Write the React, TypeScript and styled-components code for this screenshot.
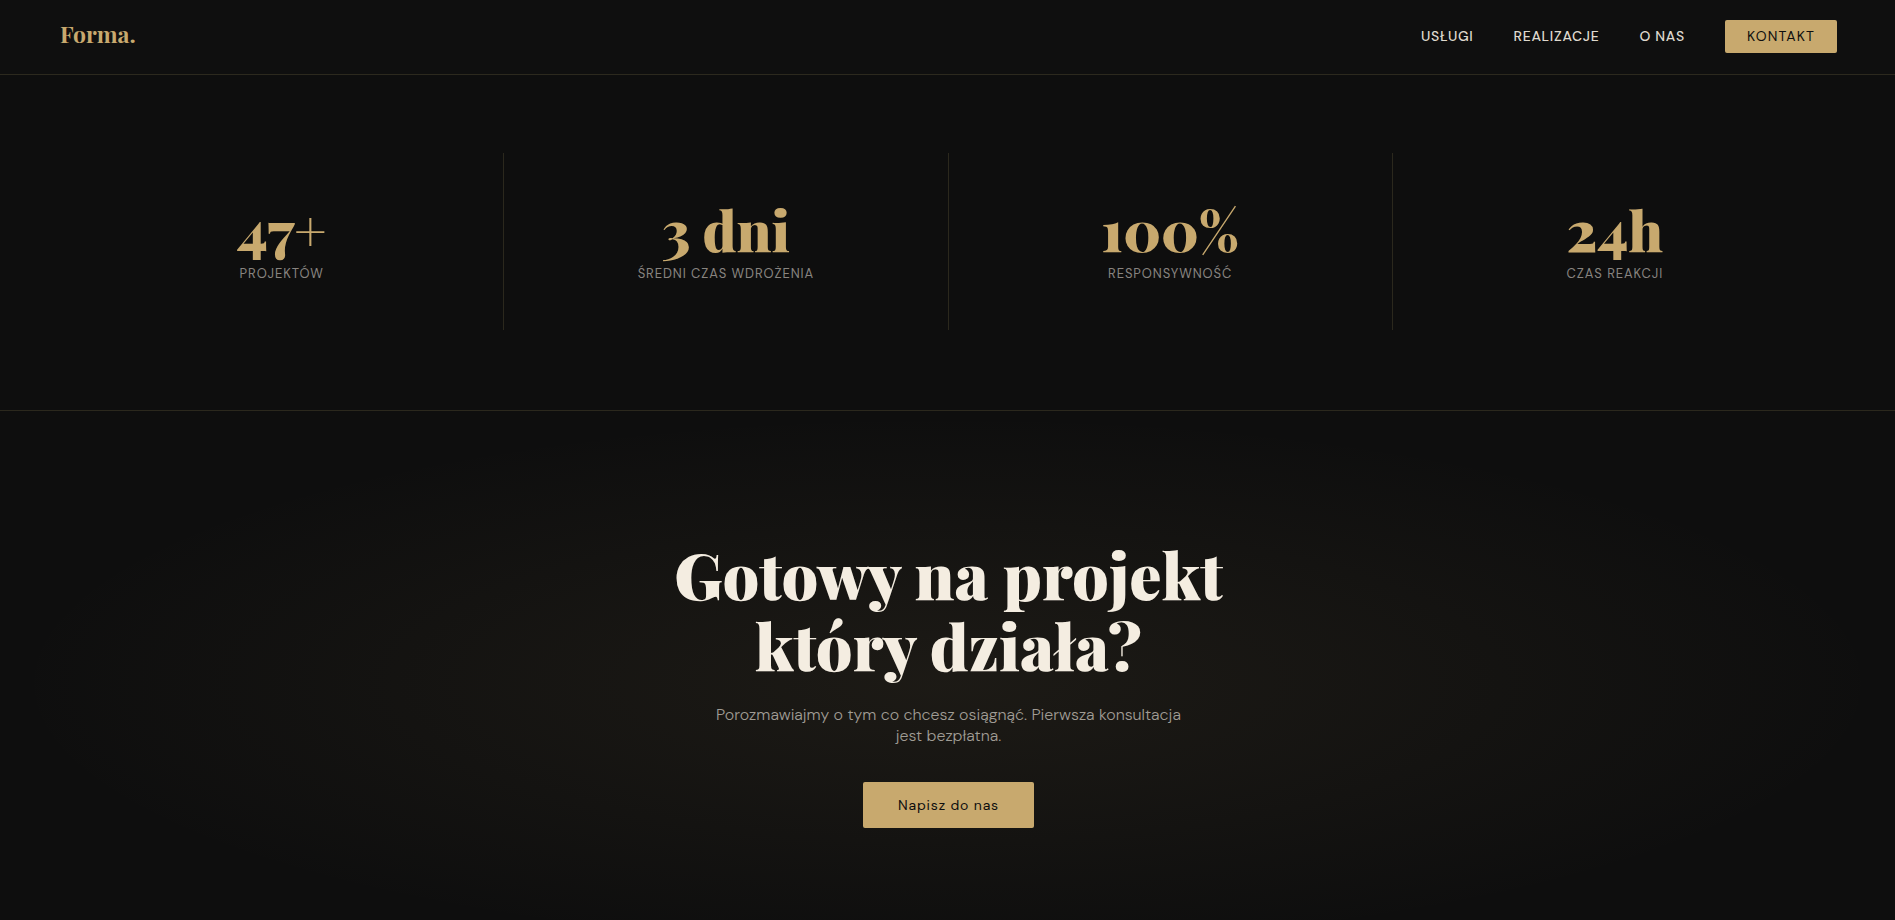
import React from 'react';
import styled, { createGlobalStyle } from 'styled-components';

const gold = '#c8a96e';
const ink = '#0e0e0e';
const cream = '#f4ede1';
const muted = '#888480';
const line = 'rgba(200, 180, 110, 0.16)';
const serif = `'Playfair Display', 'DejaVu Serif Condensed', 'Liberation Serif', serif`;
const sans = `'DM Sans', 'Open Sans', 'Liberation Sans', sans-serif`;

const GlobalStyle = createGlobalStyle`
  *, *::before, *::after { box-sizing: border-box; }
  body {
    margin: 0;
    background: ${ink};
    color: ${cream};
    font-family: ${sans};
    font-size: 16px;
  }
`;

const Header = styled.header`
  display: flex;
  align-items: flex-start;
  justify-content: space-between;
  padding: 20px 58px 21px 60px;
  background: #0f0f0f;
  border-bottom: 1px solid ${line};
`;

const Logo = styled.a`
  font-family: ${serif};
  font-size: 23px;
  line-height: 28px;
  font-weight: 700;
  color: ${gold};
  text-decoration: none;
`;

const Nav = styled.nav`
  display: flex;
  align-items: center;
  gap: 40px;
`;

const NavLink = styled.a`
  font-size: 14px;
  line-height: 33px;
  font-weight: 500;
  letter-spacing: 0.05em;
  text-transform: uppercase;
  text-decoration: none;
  color: #dfd9ce;
`;

const Button = styled.button<{ $size: 'small' | 'large' }>`
  border: 0;
  border-radius: 2px;
  background: ${gold};
  color: ${ink};
  font-family: ${sans};
  font-size: 14px;
  font-weight: 400;
  cursor: pointer;
  ${({ $size }) =>
    $size === 'small'
      ? `padding: 0 22px; line-height: 33px; letter-spacing: 0.08em; text-transform: uppercase;`
      : `padding: 0 35px; line-height: 46px; letter-spacing: 0.06em;`}
`;

const Stats = styled.section`
  display: grid;
  grid-template-columns: repeat(4, 1fr);
  padding: 78px 58px 80px 60px;
  border-bottom: 1px solid ${line};
`;

const Stat = styled.div`
  display: flex;
  flex-direction: column;
  align-items: center;
  gap: 8px;
  padding: 48px 32px;
  text-align: center;
  border-right: 1px solid ${line};

  &:last-child {
    border-right: 0;
  }
`;

const StatValue = styled.div`
  font-family: ${serif};
  font-size: 56px;
  line-height: 56px;
  font-weight: 900;
  color: ${gold};
`;

const StatLabel = styled.div`
  font-size: 13px;
  line-height: 17px;
  letter-spacing: 0.07em;
  text-transform: uppercase;
  color: ${muted};
`;

const Cta = styled.section`
  display: flex;
  flex-direction: column;
  align-items: center;
  padding: 127px 58px 127px 60px;
  text-align: center;
  background: radial-gradient(ellipse at center, rgba(200, 169, 110, 0.08) 0%, transparent 70%);
`;

const Title = styled.h2`
  max-width: 700px;
  margin: 0 0 24px;
  font-family: ${serif};
  font-size: 64px;
  line-height: 71px;
  font-weight: 900;
`;

const Lead = styled.p`
  max-width: 480px;
  margin: 0 0 36px;
  font-size: 16px;
  line-height: 21px;
  font-weight: 300;
  color: #a09c94;
`;

const links = [
  { label: 'Usługi', href: '#uslugi' },
  { label: 'Realizacje', href: '#realizacje' },
  { label: 'O nas', href: '#o-nas' },
];

const stats = [
  { value: '47+', label: 'Projektów' },
  { value: '3 dni', label: 'Średni czas wdrożenia' },
  { value: '100%', label: 'Responsywność' },
  { value: '24h', label: 'Czas reakcji' },
];

export default function App() {
  return (
    <>
      <GlobalStyle />
      <Header>
        <Logo href="#">Forma.</Logo>
        <Nav>
          {links.map((l) => (
            <NavLink key={l.href} href={l.href}>
              {l.label}
            </NavLink>
          ))}
          <Button $size="small" type="button">Kontakt</Button>
        </Nav>
      </Header>
      <main>
        <Stats>
          {stats.map((s) => (
            <Stat key={s.label}>
              <StatValue>{s.value}</StatValue>
              <StatLabel>{s.label}</StatLabel>
            </Stat>
          ))}
        </Stats>
        <Cta>
          <Title>
            Gotowy na projekt
            <br />
            który działa?
          </Title>
          <Lead>Porozmawiajmy o tym co chcesz osiągnąć. Pierwsza konsultacja jest bezpłatna.</Lead>
          <Button $size="large" type="button">Napisz do nas</Button>
        </Cta>
      </main>
    </>
  );
}
